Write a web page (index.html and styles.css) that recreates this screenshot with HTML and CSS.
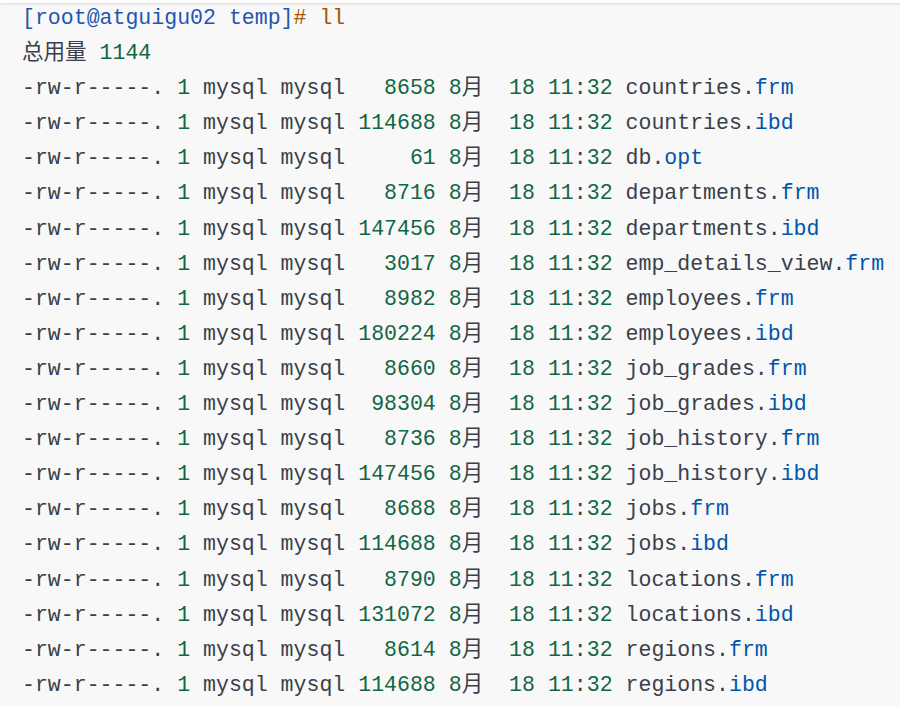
FILE: index.html
```html
<!DOCTYPE html>
<html lang="en">
<head>
    <meta charset="UTF-8">
    <meta name="viewport" content="width=device-width, initial-scale=1.0">
    <title>ll - temp</title>
    <link rel="stylesheet" href="styles.css">
</head>
<body>

    <div class="topbar"></div>

<pre class="term"><span class="prompt">[root@atguigu02 temp]</span><span class="cmt"># ll</span>
总用量 <span class="num">1144</span>
-rw-r-----. <span class="num">1</span> mysql mysql   <span class="num">8658</span> <span class="num">8</span>月  <span class="num">18</span> <span class="num">11</span>:<span class="num">32</span> countries.<span class="ext">frm</span>
-rw-r-----. <span class="num">1</span> mysql mysql <span class="num">114688</span> <span class="num">8</span>月  <span class="num">18</span> <span class="num">11</span>:<span class="num">32</span> countries.<span class="ext">ibd</span>
-rw-r-----. <span class="num">1</span> mysql mysql     <span class="num">61</span> <span class="num">8</span>月  <span class="num">18</span> <span class="num">11</span>:<span class="num">32</span> db.<span class="ext">opt</span>
-rw-r-----. <span class="num">1</span> mysql mysql   <span class="num">8716</span> <span class="num">8</span>月  <span class="num">18</span> <span class="num">11</span>:<span class="num">32</span> departments.<span class="ext">frm</span>
-rw-r-----. <span class="num">1</span> mysql mysql <span class="num">147456</span> <span class="num">8</span>月  <span class="num">18</span> <span class="num">11</span>:<span class="num">32</span> departments.<span class="ext">ibd</span>
-rw-r-----. <span class="num">1</span> mysql mysql   <span class="num">3017</span> <span class="num">8</span>月  <span class="num">18</span> <span class="num">11</span>:<span class="num">32</span> emp_details_view.<span class="ext">frm</span>
-rw-r-----. <span class="num">1</span> mysql mysql   <span class="num">8982</span> <span class="num">8</span>月  <span class="num">18</span> <span class="num">11</span>:<span class="num">32</span> employees.<span class="ext">frm</span>
-rw-r-----. <span class="num">1</span> mysql mysql <span class="num">180224</span> <span class="num">8</span>月  <span class="num">18</span> <span class="num">11</span>:<span class="num">32</span> employees.<span class="ext">ibd</span>
-rw-r-----. <span class="num">1</span> mysql mysql   <span class="num">8660</span> <span class="num">8</span>月  <span class="num">18</span> <span class="num">11</span>:<span class="num">32</span> job_grades.<span class="ext">frm</span>
-rw-r-----. <span class="num">1</span> mysql mysql  <span class="num">98304</span> <span class="num">8</span>月  <span class="num">18</span> <span class="num">11</span>:<span class="num">32</span> job_grades.<span class="ext">ibd</span>
-rw-r-----. <span class="num">1</span> mysql mysql   <span class="num">8736</span> <span class="num">8</span>月  <span class="num">18</span> <span class="num">11</span>:<span class="num">32</span> job_history.<span class="ext">frm</span>
-rw-r-----. <span class="num">1</span> mysql mysql <span class="num">147456</span> <span class="num">8</span>月  <span class="num">18</span> <span class="num">11</span>:<span class="num">32</span> job_history.<span class="ext">ibd</span>
-rw-r-----. <span class="num">1</span> mysql mysql   <span class="num">8688</span> <span class="num">8</span>月  <span class="num">18</span> <span class="num">11</span>:<span class="num">32</span> jobs.<span class="ext">frm</span>
-rw-r-----. <span class="num">1</span> mysql mysql <span class="num">114688</span> <span class="num">8</span>月  <span class="num">18</span> <span class="num">11</span>:<span class="num">32</span> jobs.<span class="ext">ibd</span>
-rw-r-----. <span class="num">1</span> mysql mysql   <span class="num">8790</span> <span class="num">8</span>月  <span class="num">18</span> <span class="num">11</span>:<span class="num">32</span> locations.<span class="ext">frm</span>
-rw-r-----. <span class="num">1</span> mysql mysql <span class="num">131072</span> <span class="num">8</span>月  <span class="num">18</span> <span class="num">11</span>:<span class="num">32</span> locations.<span class="ext">ibd</span>
-rw-r-----. <span class="num">1</span> mysql mysql   <span class="num">8614</span> <span class="num">8</span>月  <span class="num">18</span> <span class="num">11</span>:<span class="num">32</span> regions.<span class="ext">frm</span>
-rw-r-----. <span class="num">1</span> mysql mysql <span class="num">114688</span> <span class="num">8</span>月  <span class="num">18</span> <span class="num">11</span>:<span class="num">32</span> regions.<span class="ext">ibd</span></pre>

</body>
</html>
```
FILE: styles.css
```css
html, body {
    margin: 0;
    background: #f8f8f8;
}
.topbar {
    position: fixed;
    top: 0;
    left: 0;
    right: 0;
    height: 3px;
    background: #fff;
    box-shadow: 0 1px 3px rgba(0, 0, 0, 0.12);
}
.term {
    margin: 0;
    padding: 1px 0 0 22px;
    font-family: "Liberation Mono", "Noto Sans CJK SC", monospace;
    font-size: 21.55px;
    line-height: 35.1px;
    color: #3a3f4a;
}
.num {
    color: #116644;
}
.ext {
    color: #0055aa;
}
.prompt {
    color: #1f56b0;
}
.cmt {
    color: #aa5500;
}
```
